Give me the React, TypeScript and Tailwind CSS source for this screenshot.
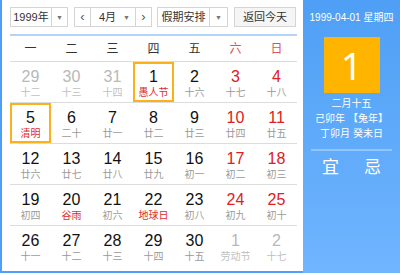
import React from 'react';

type Day = { d: number; l: string; other?: boolean; red?: boolean; fest?: boolean; sel?: boolean };

const weeks: Day[][] = [
  [
    { d: 29, l: '十二', other: true },
    { d: 30, l: '十三', other: true },
    { d: 31, l: '十四', other: true },
    { d: 1, l: '愚人节', fest: true, sel: true },
    { d: 2, l: '十六' },
    { d: 3, l: '十七', red: true },
    { d: 4, l: '十八', red: true },
  ],
  [
    { d: 5, l: '清明', fest: true, sel: true },
    { d: 6, l: '二十' },
    { d: 7, l: '廿一' },
    { d: 8, l: '廿二' },
    { d: 9, l: '廿三' },
    { d: 10, l: '廿四', red: true },
    { d: 11, l: '廿五', red: true },
  ],
  [
    { d: 12, l: '廿六' },
    { d: 13, l: '廿七' },
    { d: 14, l: '廿八' },
    { d: 15, l: '廿九' },
    { d: 16, l: '初一' },
    { d: 17, l: '初二', red: true },
    { d: 18, l: '初三', red: true },
  ],
  [
    { d: 19, l: '初四' },
    { d: 20, l: '谷雨', fest: true },
    { d: 21, l: '初六' },
    { d: 22, l: '地球日', fest: true },
    { d: 23, l: '初八' },
    { d: 24, l: '初九', red: true },
    { d: 25, l: '初十', red: true },
  ],
  [
    { d: 26, l: '十一' },
    { d: 27, l: '十二' },
    { d: 28, l: '十三' },
    { d: 29, l: '十四' },
    { d: 30, l: '十五' },
    { d: 1, l: '劳动节', other: true },
    { d: 2, l: '十七', other: true },
  ],
];

const weekdays = ['一', '二', '三', '四', '五', '六', '日'];

function Caret() {
  return <span className="text-[7px] text-[#777] leading-none">▼</span>;
}

export default function App() {
  return (
    <div className="w-[400px] h-[275px] bg-white font-['Liberation_Sans','Noto_Sans_CJK_SC',sans-serif]">
      <div className="flex h-[273px]">
        {/* calendar */}
        <div className="w-[303px] border-l-2 border-b-2 border-[#4e9ff5] pl-2 pr-[6px] pt-[7px] flex flex-col">
          <div className="flex h-[20px] text-[11px] text-[#333]">
            <div className="w-[58px] flex border border-[#d5d5d5] bg-white">
              <div className="flex-1 flex items-center justify-center">1999年</div>
              <div className="w-[16px] border-l border-[#d5d5d5] flex items-center justify-center"><Caret /></div>
            </div>
            <div className="ml-[6px] w-[78px] flex border border-[#d5d5d5] bg-white">
              <div className="w-[16px] border-r border-[#d5d5d5] flex items-center justify-center text-[13px] text-[#555]">‹</div>
              <div className="flex-1 flex items-center pl-[8px] pr-[5px] justify-between">
                <span>4月</span>
                <Caret />
              </div>
              <div className="w-[16px] border-l border-[#d5d5d5] flex items-center justify-center text-[13px] text-[#555]">›</div>
            </div>
            <div className="ml-[5px] w-[71px] flex border border-[#d5d5d5] bg-white">
              <div className="flex-1 flex items-center justify-center">假期安排</div>
              <div className="w-[18px] border-l border-[#d5d5d5] flex items-center justify-center"><Caret /></div>
            </div>
            <div className="ml-[6px] w-[62px] border border-[#d5d5d5] bg-[#f5f5f5] flex items-center justify-center">返回今天</div>
          </div>
          <div className="mt-[7px] h-[2px] bg-[#b3d4f6]" />
          <div className="grid grid-cols-7 h-[25px] items-center text-[12px] text-[#333] text-center">
            {weekdays.map((w, i) => (
              <div key={w} className={i >= 5 ? 'text-[#e0525c]' : ''}>{w}</div>
            ))}
          </div>
          {weeks.map((week, wi) => (
            <div key={wi} className="grid grid-cols-7 border-t border-[#dcdcdc] h-[41px]">
              {week.map((day, di) => {
                const numColor = day.other ? 'text-[#b8b8b8]' : day.red ? 'text-[#e02020]' : 'text-[#111]';
                const lunarColor = day.other ? 'text-[#c0c0c0]' : day.fest ? 'text-[#e02d2d]' : 'text-[#9a9a9a]';
                return (
                  <div
                    key={di}
                    className={`flex flex-col items-center pt-[4px] border-2 ${day.sel ? 'border-[#fbb117]' : 'border-transparent'}`}
                  >
                    <div className={`text-[16px] leading-[18px] ${numColor}`}>{day.d}</div>
                    <div className={`text-[10px] leading-[14px] whitespace-nowrap ${lunarColor}`}>{day.l}</div>
                  </div>
                );
              })}
            </div>
          ))}
        </div>
        {/* side panel */}
        <div className="flex-1 bg-gradient-to-b from-[#4e9ff5] to-[#70b5ff] flex flex-col items-center text-white">
          <div className="mt-[10px] text-[10px] leading-[16px] whitespace-nowrap">1999-04-01 星期四</div>
          <div className="mt-[11px] w-[56px] h-[56px] bg-[#ffb400] flex items-center justify-center text-[38px] leading-none font-['Noto_Sans',sans-serif]">1</div>
          <div className="mt-[3px] text-[10px] leading-[15px] text-center whitespace-nowrap">
            <div>二月十五</div>
            <div>己卯年 【兔年】</div>
            <div>丁卯月 癸未日</div>
          </div>
          <div className="mt-[8px] w-[81px] h-[2px] bg-[#93c7fb]" />
          <div className="mt-[7px] flex gap-[25px] text-[17px] leading-[20px]">
            <span>宜</span>
            <span>忌</span>
          </div>
        </div>
      </div>
    </div>
  );
}
